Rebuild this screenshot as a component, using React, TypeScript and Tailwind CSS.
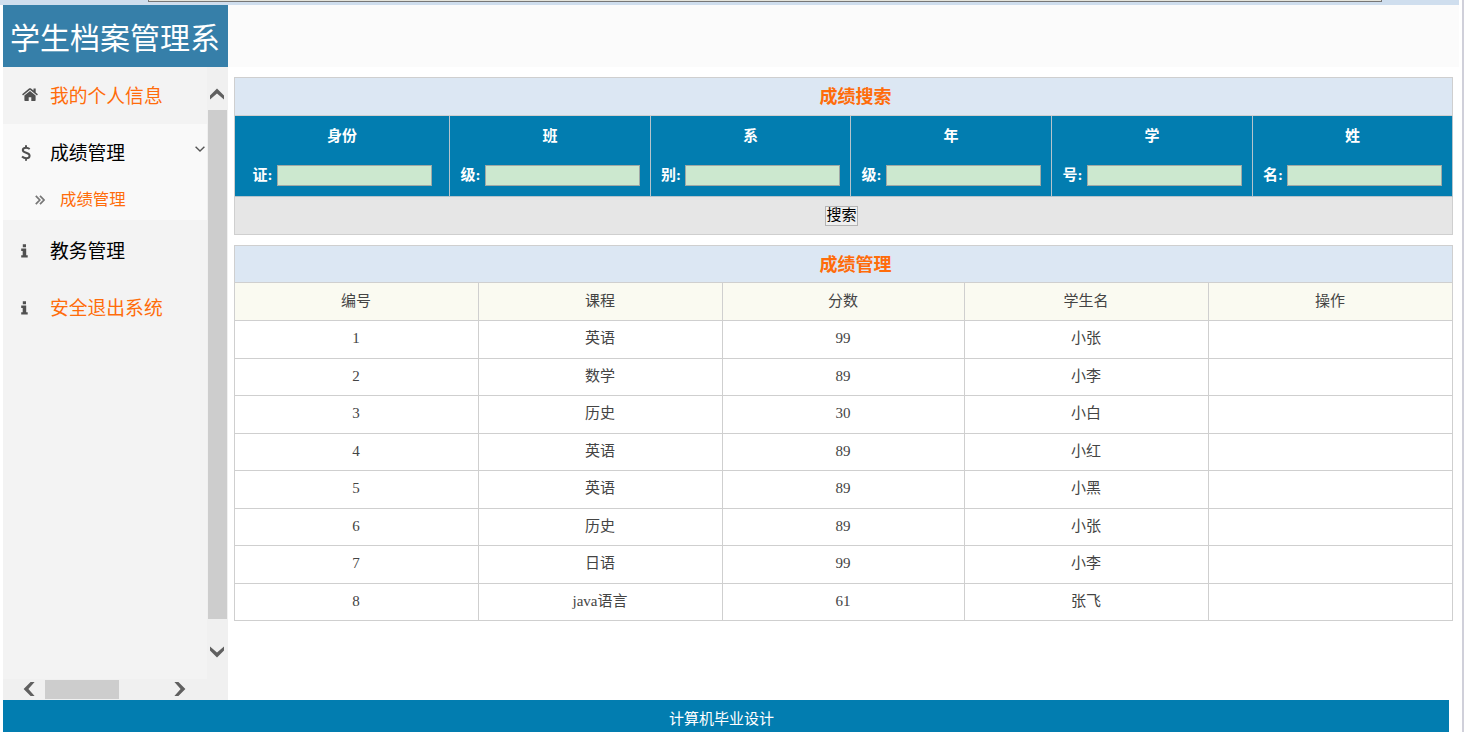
import React from 'react';

interface ScoreRow {
  id: number;
  course: string;
  score: number;
  student: string;
}

const searchFields = [
  { first: '身份', second: '证' },
  { first: '班', second: '级' },
  { first: '系', second: '别' },
  { first: '年', second: '级' },
  { first: '学', second: '号' },
  { first: '姓', second: '名' },
];

const columns = ['编号', '课程', '分数', '学生名', '操作'];

const scores: ScoreRow[] = [
  { id: 1, course: '英语', score: 99, student: '小张' },
  { id: 2, course: '数学', score: 89, student: '小李' },
  { id: 3, course: '历史', score: 30, student: '小白' },
  { id: 4, course: '英语', score: 89, student: '小红' },
  { id: 5, course: '英语', score: 89, student: '小黑' },
  { id: 6, course: '历史', score: 89, student: '小张' },
  { id: 7, course: '日语', score: 99, student: '小李' },
  { id: 8, course: 'java语言', score: 61, student: '张飞' },
];

// Scrollbar arrow, pointing up by default
const Arrow: React.FC<{ className?: string }> = ({ className = '' }) => (
  <svg viewBox="0 0 14 12" className={`w-3.5 h-3 shrink-0 ${className}`}>
    <path d="M0 7.6 7 .6l7 7v4L7 5.4 0 11.6z" fill="#606060" />
  </svg>
);

const HomeIcon: React.FC = () => (
  <svg viewBox="0 0 16 13" className="w-4 h-[13px] shrink-0" fill="#505050">
    <path d="M8 3 2.400 7.600v4.700c0 .4.3.6.6.6h3.700V9.300h2.600v3.600H13c.3 0 .6-.2.6-.6V7.600z" />
    <path d="M15.900 6.300 13.700 4.500V.6h-2.200v2L9 .6c-.6-.5-1.400-.5-2 0L.1 6.300l.9 1.100L8 1.700l7 5.700z" />
  </svg>
);

const DollarIcon: React.FC = () => (
  <svg viewBox="0 0 10 16" className="w-2.5 h-4 shrink-0">
    <path
      d="M8.700 4C7.600 3.100 6.400 2.700 5 2.700 3.100 2.700 1.800 3.600 1.800 5c0 3.500 6.800 2 6.800 5.700 0 1.600-1.400 2.600-3.400 2.600-1.600 0-3-.6-4.200-1.700M5 .2v2.500M5 13.300v2.500"
      fill="none"
      stroke="#505050"
      strokeWidth="2"
    />
  </svg>
);

const InfoIcon: React.FC = () => (
  <svg viewBox="0 0 7 14" className="w-[7px] h-[14px] shrink-0" fill="#505050">
    <path d="M1.800.3h3.200v2.900H1.800zM.2 4.600h5v6.600h1.500v2.400H.2v-2.400h1.500V7H.2z" />
  </svg>
);

const Sidebar: React.FC = () => (
  <aside className="w-[225px] h-[633px] shrink-0 bg-[#f0f0f0]">
    <div className="flex h-[612px]">
      <nav className="w-[204px] bg-[#f3f3f3] text-[18.8px] text-black">
        <div className="flex items-center h-[57px] pl-[19px] text-[#ff6c0a]">
          <div className="pb-0.5">
            <HomeIcon />
          </div>
          <span className="pt-[3px] ml-3">我的个人信息</span>
        </div>
        <div className="h-24 bg-[#f9f9f9]">
          <div className="flex items-center h-[57px] pl-[18px]">
            <DollarIcon />
            <span className="pt-[3px] ml-[19px]">成绩管理</span>
            <svg viewBox="0 0 10 6" className="w-2.5 h-1.5 ml-[70px] mb-2">
              <path d="M.6.7 5 5 9.4.7" fill="none" stroke="#555" strokeWidth="1.4" />
            </svg>
          </div>
          <div className="flex items-center h-[38px] pl-8 text-[16.4px] text-[#ff6c0a]">
            <svg viewBox="0 0 10 10" className="w-2.5 h-2.5">
              <path d="M.8.8 4.8 5l-4 4.2M5 .8 9 5 5 9.2" fill="none" stroke="#777" strokeWidth="1.7" />
            </svg>
            <span className="pt-px ml-[15px]">成绩管理</span>
          </div>
        </div>
        <div className="flex items-center h-[61px] pl-[18px]">
          <InfoIcon />
          <span className="pt-[3px] ml-[22px]">教务管理</span>
        </div>
        <div className="flex items-center h-[54px] pl-[18px] text-[#ff6c0a]">
          <InfoIcon />
          <span className="pt-0.5 ml-[22px]">安全退出系统</span>
        </div>
      </nav>
      <div className="flex flex-col items-center w-5 pt-[21px]">
        <Arrow />
        <div className="w-[19px] h-[509px] mt-[10px] ml-px bg-[#cdcdcd]" />
        <Arrow className="mt-[27px] rotate-180" />
      </div>
    </div>
    <div className="flex items-center h-[21px] pb-px pl-[19px]">
      <Arrow className="-rotate-90" />
      <div className="w-[74px] h-[19px] ml-[9px] bg-[#cdcdcd]" />
      <Arrow className="ml-[54px] rotate-90" />
    </div>
  </aside>
);

const SearchPanel: React.FC = () => (
  <section className="w-[1219px] border-t border-l border-[#cfcfcf]">
    <h2 className="h-[38px] leading-[39px] border-r border-b border-[#cfcfcf] bg-[#dce7f3] pr-6 pl-[48px] text-center text-lg font-bold text-[#ff6c0a]">
      成绩搜索
    </h2>
    <div className="grid grid-cols-[215px_201px_200px_201px_201px_200px]">
      {searchFields.map((field, i) => (
        <div
          key={i}
          className="h-[81px] pt-px border-r border-b border-[#b5c4cc] bg-[#027db0] text-center text-[15px] font-bold text-white"
        >
          <div className="h-[39px] leading-[39px]">{field.first}</div>
          <div className="flex items-center justify-center h-[39px] pb-px">
            <span>{field.second}:</span>
            <input className="w-[155px] h-[21px] ml-1 border border-[#a0a9a6] bg-[#cce8cf] outline-none" />
          </div>
        </div>
      ))}
    </div>
    <div className="flex items-center justify-center h-[38px] border-r border-b border-[#cfcfcf] bg-[#e6e6e6]">
      <button className="w-[33px] h-5 -ml-1 border border-[#b4b4b4] bg-[#efefef] text-[15px] leading-[17px] whitespace-nowrap text-black">
        搜索
      </button>
    </div>
  </section>
);

const ScoreTable: React.FC = () => (
  <section className="w-[1219px] mt-[10px] border-t border-l border-[#cfcfcf] text-center text-[15px] text-[#444]">
    <h2 className="h-[37px] leading-[38px] border-r border-b border-[#cfcfcf] bg-[#dce7f3] pr-6 pl-[48px] text-lg font-bold text-[#ff6c0a]">
      成绩管理
    </h2>
    <div className="grid grid-cols-[244px_244px_242px_244px_244px] grid-rows-[38px_38px_37px_38px_37px_38px_37px_38px_37px]">
      {columns.map(name => (
        <div key={name} className="pr-px leading-9 border-r border-b border-[#cfcfcf] bg-[#fafaf1]">
          {name}
        </div>
      ))}
      {scores.map(row => (
        <React.Fragment key={row.id}>
          {[row.id, row.course, row.score, row.student, ''].map((value, i) => (
            <div key={i} className="pr-px leading-[35px] border-r border-b border-[#cfcfcf]">
              {value}
            </div>
          ))}
        </React.Fragment>
      ))}
    </div>
  </section>
);

const App: React.FC = () => {
  return (
    <div className="flex w-[1464px] h-[732px] overflow-hidden bg-white font-['Liberation_Serif','Noto_Sans_CJK_SC',serif]">
      <div className="w-[1459px] shrink-0">
        {/* bottom edge of the browser toolbar */}
        <div className="h-[5px] bg-[#cfdeee]">
          <div className="w-[1234px] h-0.5 ml-[148px] border-x border-b border-[#777] bg-[#e4e4dc]" />
        </div>
        <header className="flex h-[62px] ml-[3px] bg-[#fbfbfb]">
          <div className="w-[225px] pl-[7px] bg-[#367fa9] text-[30px] leading-[67px] whitespace-nowrap text-white">
            学生档案管理系
          </div>
        </header>
        <div className="flex h-[633px] pl-[3px]">
          <Sidebar />
          <main className="pt-[10px] pl-[6px]">
            <SearchPanel />
            <ScoreTable />
          </main>
        </div>
        <footer className="w-[1446px] h-8 ml-[3px] pr-[9px] bg-[#027db0] text-center text-[15px] leading-[39px] text-white">
          计算机毕业设计
        </footer>
      </div>
      <div className="w-0.5 ml-[3px] bg-[#d0d0da]" />
    </div>
  );
};

export default App;
